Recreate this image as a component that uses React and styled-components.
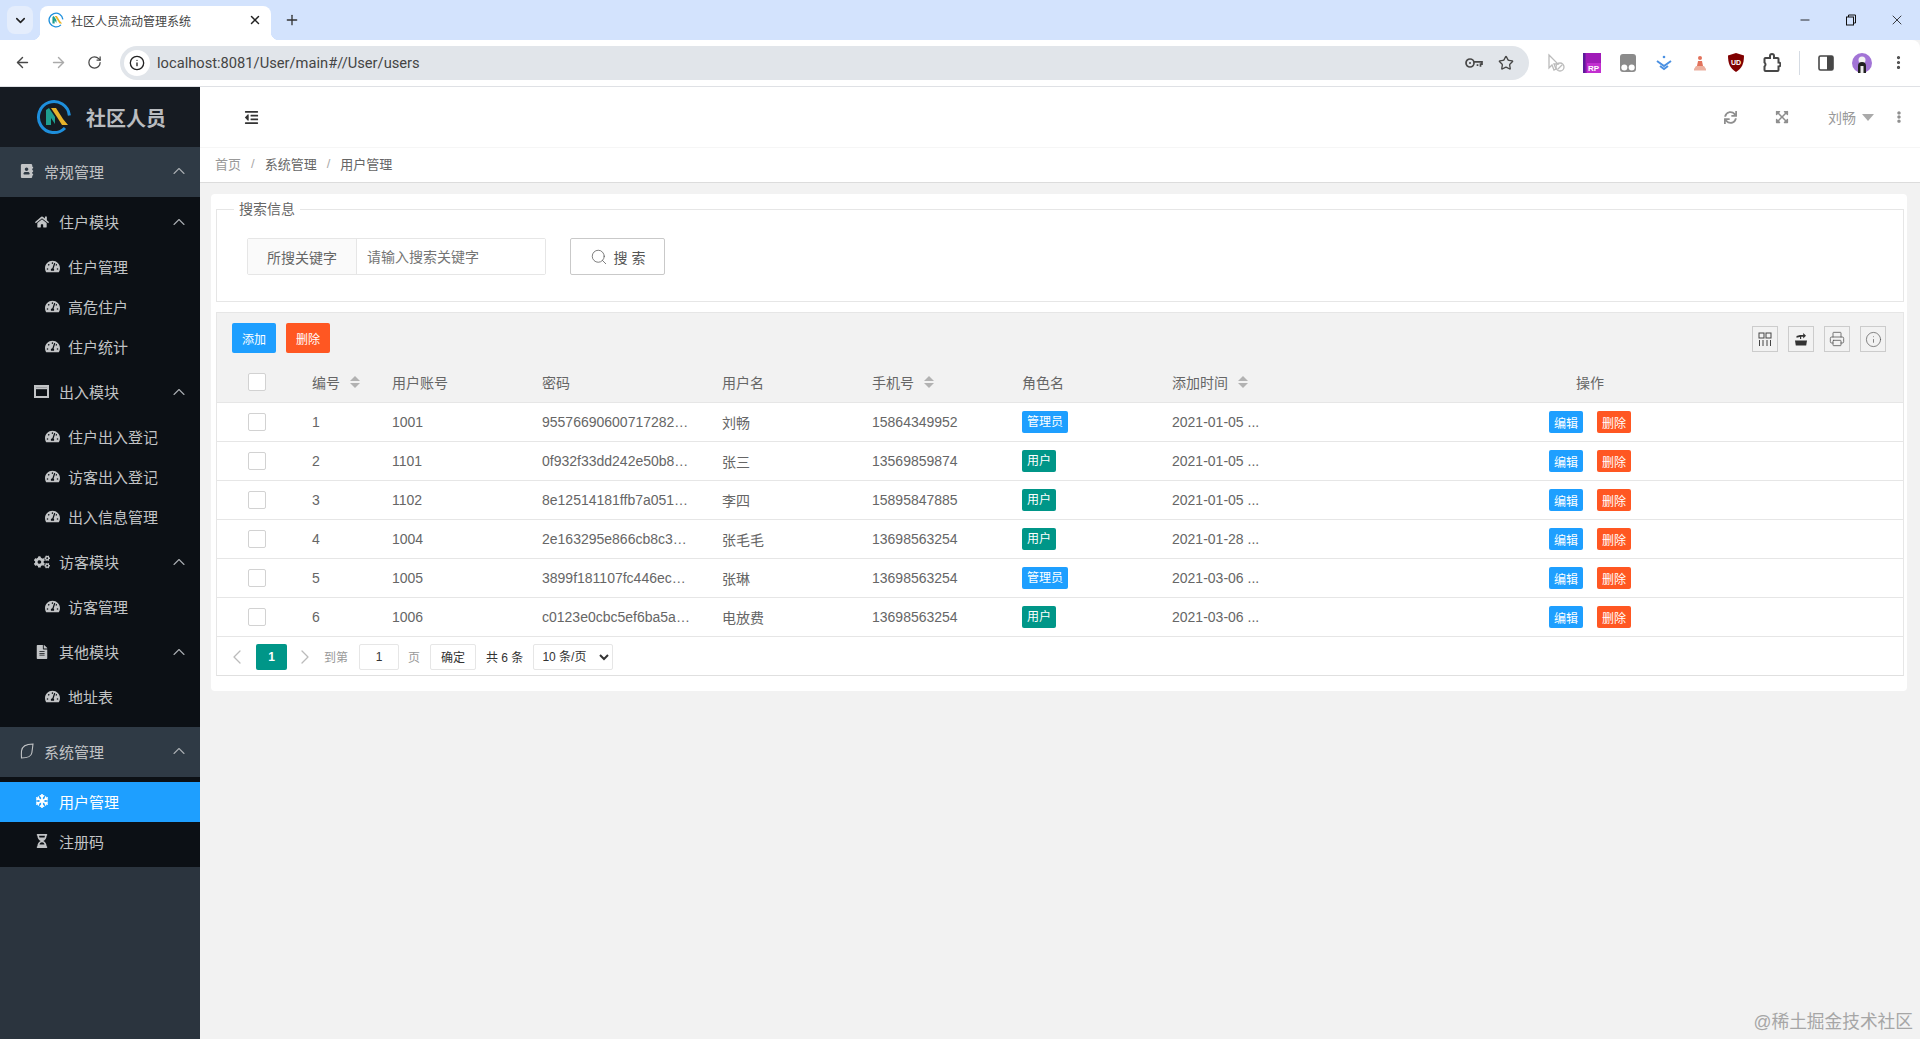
import React from 'react'
import styled, { createGlobalStyle } from 'styled-components'
import {
  ArrowLeft, ArrowRight, ChevronDown, ChevronUp, ChevronLeft, ChevronRight, EllipsisVertical, Info,
  Minus, Plus, Printer, RotateCw, Search, Star, X,
} from 'lucide-react'
import {
  FaAddressBook, FaCogs, FaEllipsisV, FaExpandArrowsAlt, FaFileAlt, FaHome, FaHourglassHalf,
  FaOutdent, FaSnowflake, FaSync, FaTachometerAlt,
} from 'react-icons/fa'

const GlobalStyle = createGlobalStyle`
  html, body { margin: 0; padding: 0; height: 100%; }
  body {
    font-family: "Liberation Sans", "Noto Sans CJK SC", sans-serif;
    font-size: 14px;
    color: #666;
    background: #f2f2f2;
  }
  * { box-sizing: border-box; }
`

const Page = styled.div`
  display: flex;
  flex-direction: column;
  height: 100vh;
  overflow: hidden;
  position: relative;
`

/* browser chrome */
const TabStrip = styled.div`
  display: flex;
  align-items: flex-start;
  height: 40px;
  padding: 6px 0 0 7px;
  background: #d3e3fd;
  flex-shrink: 0;
`
const TabMenu = styled.div`
  width: 26px;
  height: 28px;
  border-radius: 8px;
  background: #e4edfc;
  color: #222;
  display: flex;
  align-items: center;
  justify-content: center;
`
const Tab = styled.div`
  position: relative;
  width: 231px;
  height: 34px;
  margin-left: 7px;
  padding: 0 9px 6px 8px;
  display: flex;
  align-items: center;
  background: #fff;
  border-radius: 8px 8px 0 0;
  &::before, &::after {
    content: "";
    position: absolute;
    bottom: 0;
    width: 8px;
    height: 8px;
  }
  &::before { left: -8px; background: radial-gradient(circle at 0 0, transparent 8px, #fff 8.5px); }
  &::after { right: -8px; background: radial-gradient(circle at 100% 0, transparent 8px, #fff 8.5px); }
`
const TabTitle = styled.span`
  margin-left: 7px;
  flex: 1;
  font-size: 12px;
  color: #444;
  white-space: nowrap;
`
const NewTab = styled.div`
  width: 26px;
  height: 28px;
  margin-left: 8px;
  color: #333;
  display: flex;
  align-items: center;
  justify-content: center;
`
const WindowControls = styled.div`
  display: flex;
  margin: -6px 0 0 auto;
`
const WindowButton = styled.div`
  width: 46px;
  height: 40px;
  color: #111;
  display: flex;
  align-items: center;
  justify-content: center;
`
const Toolbar = styled.div`
  display: flex;
  align-items: center;
  height: 47px;
  padding: 0 4px 1px;
  background: #fff;
  border-bottom: 1px solid #dfe1e5;
  border-radius: 0 8px 0 0;
  flex-shrink: 0;
`
const Slot = styled.div`
  width: ${p => p.$w || 36}px;
  height: 34px;
  flex-shrink: 0;
  display: flex;
  align-items: center;
  justify-content: center;
  color: ${p => p.$color || '#474747'};
`
const Omnibox = styled.div`
  flex: 1;
  height: 34px;
  margin: 0 9px 0 8px;
  padding: 0 7px 0 4px;
  display: flex;
  align-items: center;
  background: #e1e5ea;
  border-radius: 17px;
`
const SiteInfo = styled.div`
  width: 26px;
  height: 26px;
  border-radius: 50%;
  background: #fff;
  color: #222;
  display: flex;
  align-items: center;
  justify-content: center;
`
const UrlText = styled.span`
  flex: 1;
  margin-left: 7px;
  font-family: Roboto, "Liberation Sans", sans-serif;
  font-size: 14.7px;
  color: #444;
`
const Divider = styled.div`
  width: 1px;
  height: 24px;
  background: #d5dbe3;
`

/* page frame */
const Body = styled.div`
  flex: 1;
  display: flex;
  min-height: 0;
`
const Sidebar = styled.aside`
  width: 200px;
  flex-shrink: 0;
  background: #2b343e;
  color: #c2c4c6;
`
const Brand = styled.div`
  height: 60px;
  padding-left: 36px;
  display: flex;
  align-items: center;
  gap: 14px;
  background: #161b22;
`
const BrandName = styled.span`
  font-size: 20px;
  font-weight: 700;
  color: #b9bcc0;
`
const NavRow = styled.div`
  display: flex;
  align-items: center;
  height: ${p => p.$h}px;
  padding: 0 11px 2px ${p => p.$indent}px;
  gap: ${p => p.$gap}px;
  font-size: 15px;
  color: ${p => (p.$active ? '#fff' : 'inherit')};
  background: ${p => (p.$active ? '#1e9fff' : p.$group ? '#2f3a45' : 'transparent')};
`
const NavIcon = styled.span`
  width: ${p => p.$w}px;
  display: flex;
  justify-content: center;
  flex-shrink: 0;
  & > svg { flex-shrink: 0; }
`
const NavArrow = styled(ChevronUp)`
  margin-left: auto;
  color: #a9adb1;
`
const SubMenu = styled.div`
  background: #0c1015;
  padding: ${p => p.$pad};
`
const SubList = styled.div`
  padding: 2px 0 3px;
`

const Main = styled.main`
  flex: 1;
  min-width: 0;
  display: flex;
  flex-direction: column;
`
const TopBar = styled.div`
  height: 61px;
  padding: 0 15px 0 44px;
  display: flex;
  align-items: center;
  background: #fff;
  border-bottom: 1px solid #f6f6f6;
  color: #333;
`
const TopTools = styled.div`
  margin-left: auto;
  display: flex;
  align-items: center;
  color: #8f8f8f;
`
const TopTool = styled.div`
  width: 52px;
  display: flex;
  justify-content: center;
`
const UserMenu = styled.div`
  margin-left: 20px;
  display: flex;
  align-items: center;
  gap: 6px;
  font-size: 14px;
  color: #999;
`
const UserCaret = styled.span`
  border: 6px solid transparent;
  border-top: 7px solid #aaa;
  border-bottom: 0;
`
const TopDots = styled.div`
  margin-left: 19px;
  display: flex;
`
const Crumbs = styled.div`
  height: 35px;
  padding: 0 0 3px 15px;
  display: flex;
  align-items: center;
  background: #fff;
  border-bottom: 1px solid #dcdcdc;
  font-size: 13px;
  color: #666;
`
const CrumbSep = styled.span`
  margin: 0 10px;
  color: #aaa;
`
const CrumbHome = styled.span`
  color: #999;
`
const Content = styled.div`
  flex: 1;
  padding: 11px 13px 0 11px;
  background: #f2f2f2;
`
const Card = styled.div`
  padding: 6px 3px 15px 5px;
  background: #fff;
  border-radius: 4px;
`

/* search */
const SearchBox = styled.fieldset`
  margin: 0;
  padding: 20px 30px 26px;
  border: 1px solid #e6e6e6;
  min-width: 0;
`
const SearchLegend = styled.legend`
  margin-left: -13px;
  padding: 0 5px;
  font-size: 14px;
  line-height: 18px;
  color: #666;
`
const SearchForm = styled.div`
  display: flex;
`
const InputGroup = styled.div`
  width: 299px;
  height: 37px;
  display: flex;
  border: 1px solid #e6e6e6;
  border-radius: 2px;
`
const InputLabel = styled.label`
  width: 109px;
  display: flex;
  align-items: center;
  justify-content: center;
  background: #fafafa;
  border-right: 1px solid #e6e6e6;
  color: #666;
`
const SearchInput = styled.input`
  flex: 1;
  min-width: 0;
  padding: 0 10px;
  border: 0;
  outline: 0;
  font: inherit;
  color: #666;
  &::placeholder { color: #757575; opacity: 1; }
`
const SearchButton = styled.button`
  width: 95px;
  height: 37px;
  margin-left: 24px;
  display: flex;
  align-items: center;
  justify-content: center;
  gap: 6px;
  background: #fff;
  border: 1px solid #c9c9c9;
  border-radius: 2px;
  font: inherit;
  color: #555;
`

/* table */
const TableBox = styled.div`
  margin-top: 10px;
  border: 1px solid #e6e6e6;
  border-bottom-color: #e0e0e0;
`
const TableTools = styled.div`
  height: 49px;
  padding: 10px 17px 0 15px;
  display: flex;
  background: #f2f2f2;
`
const ToolButton = styled.button`
  height: 30px;
  width: 44px;
  margin-right: 10px;
  padding: 0;
  border: 0;
  border-radius: 2px;
  font: inherit;
  font-size: 12px;
  color: #fff;
  background: ${p => (p.$danger ? '#ff5722' : '#1e9fff')};
`
const ToolIcons = styled.div`
  margin-left: auto;
  padding-top: 3px;
  display: flex;
  gap: 10px;
`
const ToolIcon = styled.div`
  width: 26px;
  height: 26px;
  display: flex;
  align-items: center;
  justify-content: center;
  border: 1px solid #ccc;
  color: #555;
`
const DataTable = styled.table`
  width: 100%;
  table-layout: fixed;
  border-collapse: separate;
  border-spacing: 0;
`
const Th = styled.th`
  width: ${p => (p.$w ? `${p.$w}px` : 'auto')};
  height: 41px;
  padding: 0 15px;
  font-weight: 400;
  text-align: ${p => p.$align || 'left'};
  background: #f2f2f2;
  border-bottom: 1px solid #e6e6e6;
  color: #666;
`
const Td = styled.td`
  height: 39px;
  padding: 0 15px;
  border-bottom: 1px solid #e6e6e6;
  text-align: ${p => p.$align || 'left'};
  color: #666;
  white-space: nowrap;
`
const Check = styled.input.attrs({ type: 'checkbox' })`
  appearance: none;
  display: block;
  width: 18px;
  height: 18px;
  margin: 0 auto;
  background: #fff;
  border: 1px solid #d2d2d2;
  border-radius: 2px;
`
const SortHead = styled.span`
  display: inline-flex;
  align-items: center;
  gap: 10px;
`
const SortCarets = styled.span`
  display: flex;
  flex-direction: column;
  gap: 2px;
  &::before, &::after {
    content: "";
    border: 5px solid transparent;
    border-top: 0;
    border-bottom: 5px solid #b2b2b2;
  }
  &::after {
    border-bottom: 0;
    border-top: 5px solid #b2b2b2;
  }
`
const Tag = styled.span`
  display: inline-block;
  height: 22px;
  padding: 0 5px;
  line-height: 22px;
  vertical-align: middle;
  border-radius: 2px;
  font-size: 12px;
  color: #fff;
  background: ${p => (p.$admin ? '#1e9fff' : '#009688')};
`
const RowButton = styled.button`
  width: 34px;
  height: 22px;
  padding: 0;
  border: 0;
  border-radius: 2px;
  vertical-align: middle;
  font: inherit;
  font-size: 12px;
  color: #fff;
  background: ${p => (p.$danger ? '#ff5722' : '#1e9fff')};
  & + & { margin-left: 14px; }
`
const Pager = styled.div`
  height: 38px;
  padding: 1px 0 0 14px;
  display: flex;
  align-items: center;
  font-size: 12px;
  color: #999;
`
const PagerArrow = styled.span`
  width: 12px;
  margin: ${p => p.$m};
  display: flex;
  justify-content: center;
  color: #bbb;
  & > svg { flex-shrink: 0; }
`
const PageActive = styled.span`
  width: 31px;
  height: 26px;
  display: flex;
  align-items: center;
  justify-content: center;
  border-radius: 2px;
  font-weight: 700;
  color: #fff;
  background: #009688;
`
const PagerInput = styled.input`
  width: 40px;
  height: 26px;
  margin: 0 9px 0 11px;
  padding: 0;
  border: 1px solid #e6e6e6;
  border-radius: 2px;
  outline: 0;
  text-align: center;
  font: inherit;
  color: #333;
`
const PagerOk = styled.button`
  width: 46px;
  height: 26px;
  margin: 0 10px 0 10px;
  padding: 0;
  background: #fff;
  border: 1px solid #e6e6e6;
  border-radius: 2px;
  font: inherit;
  color: #333;
`
const PagerCount = styled.span`
  color: #333;
`
const PagerSelect = styled.select`
  width: 80px;
  height: 26px;
  margin-left: 10px;
  padding: 0 0 0 4px;
  background: #fff;
  border: 1px solid #e6e6e6;
  border-radius: 2px;
  outline: 0;
  font: inherit;
  color: #333;
`
const Watermark = styled.div`
  position: absolute;
  right: 7px;
  bottom: 6px;
  font-size: 17.7px;
  color: #a6a6a6;
  white-space: nowrap;
`

const Logo = ({ size }) => (
  <svg width={size} height={size} viewBox="0 0 36 36" fill="none">
    <path d="M33.4 16.500A15.500 15.500 0 1 0 29 29" stroke="#1e8fdc" strokeWidth="3" />
    <path d="M10 26V11l3-2 6 9v7l-4-6v7h-5z" fill="#1f9e8f" />
    <path d="M15 9h5l7 11 5 6h-6l-5-8z" fill="#e8b32a" />
  </svg>
)

const LeafIcon = () => (
  <svg width="14" height="16" viewBox="0 0 14 16" fill="none" stroke="currentColor" strokeWidth="1.1">
    <path d="M13 1C7 1 2 3 1.500 8C1.200 11 1.500 15 1.500 15C6 15 11 14.500 11.800 10C12.300 7 13 1 13 1Z" />
  </svg>
)

const WindowIcon = () => (
  <svg width="15" height="13" viewBox="0 0 15 13" fill="none" stroke="currentColor">
    <rect x="1" y="1" width="13" height="11" strokeWidth="2" />
    <path d="M1 3.200h13" strokeWidth="2" />
  </svg>
)

const ColsIcon = () => (
  <svg width="14" height="14" viewBox="0 0 14 14" fill="none" stroke="#444" strokeWidth="1">
    <rect x="1" y="1" width="5" height="5" />
    <rect x="8" y="1" width="5" height="5" />
    <path d="M1.500 8v6M5 8v6M9 8v6M12.500 8v6" />
  </svg>
)

const ExportIcon = () => (
  <svg width="14" height="14" viewBox="0 0 14 14" fill="#333">
    <path d="M1 8.500h12l-.8 5H1.800z" />
    <path d="M3.500 7.500V5.200l3.500-.8V6.500h1.200V4.200h2V6L13 3.200 10.200.5v2H7L3.500 3.500z" transform="translate(-1 0.500)" />
  </svg>
)

const KeyIcon = () => (
  <svg width="18" height="12" viewBox="0 0 18 12" fill="none" stroke="#474747" strokeWidth="1.700">
    <circle cx="5" cy="6" r="4" />
    <circle cx="5" cy="6" r="1" fill="#474747" stroke="none" />
    <path d="M9 4.800h8v2.400h-1.500v2.500M12.500 7.200v1.800" />
  </svg>
)
const ExtensionIcon = () => (
  <svg width="18" height="20" viewBox="0 0 18 20" fill="none" stroke="#474747" strokeWidth="2">
    <path d="M2.500 5H7V3a2 2 0 0 1 4 0v2h3.500a1 1 0 0 1 1 1v3.500a2 2 0 0 1 0 4V17a1 1 0 0 1-1 1H2.500a1 1 0 0 1-1-1v-3.500a2.500 2.500 0 0 0 0-4V6a1 1 0 0 1 1-1z" />
  </svg>
)
const CursorOff = () => (
  <svg width="20" height="20" viewBox="0 0 20 20" fill="none" stroke="#bbb" strokeWidth="1.300">
    <path d="M3 2l9 9h-4l2 5-2 1-2-5-3 3z" />
    <circle cx="14" cy="14" r="4" />
    <path d="M11.500 16.500l5-5" />
  </svg>
)
const RpIcon = () => (
  <svg width="18" height="20" viewBox="0 0 18 20">
    <rect width="18" height="20" fill="#a01bb8" />
    <rect x="0" width="2.500" height="20" fill="#5c1a9a" />
    <rect x="4" y="10" width="14" height="10" fill="#c22fd0" />
    <text x="5" y="18" fontSize="8" fontWeight="700" fill="#fff" fontFamily="Liberation Sans">RP</text>
  </svg>
)
const GlassesIcon = () => (
  <svg width="16" height="18" viewBox="0 0 16 18">
    <path d="M3 0h10a3 3 0 0 1 3 3v12a3 3 0 0 1-3 3H3a3 3 0 0 1-3-3V3a3 3 0 0 1 3-3z" fill="#8b8b8b" />
    <circle cx="4.300" cy="13.500" r="3" fill="#fff" />
    <circle cx="11.700" cy="13.500" r="3" fill="#fff" />
  </svg>
)
const BlueChevrons = () => (
  <svg width="18" height="18" viewBox="0 0 18 18" fill="none" stroke="#4a90e2" strokeWidth="2">
    <path d="M2 7l7 5 7-5" />
    <path d="M5 12l4 3 4-3" />
    <circle cx="9" cy="3" r="1.300" fill="#4a90e2" stroke="none" />
  </svg>
)
const FigureIcon = () => (
  <svg width="14" height="16" viewBox="0 0 14 16" fill="#e2725b">
    <circle cx="7" cy="3" r="2" />
    <path d="M5 6h4l1 5H4z" />
    <path d="M1 14l2-3h8l2 3v1.500H1z" fill="#ecb09f" />
  </svg>
)
const ShieldIcon = () => (
  <svg width="16" height="19" viewBox="0 0 16 19">
    <path d="M8 0l8 2.500c0 8-2 13-8 16.500C2 15.500 0 10.500 0 2.500z" fill="#800000" />
    <text x="3" y="12" fontSize="7" fontWeight="700" fill="#fff" fontFamily="Liberation Sans">UD</text>
  </svg>
)
const SidePanel = () => (
  <svg width="16" height="16" viewBox="0 0 16 16">
    <rect x="1" y="1" width="14" height="14" rx="1.500" fill="none" stroke="#474747" strokeWidth="1.600" />
    <rect x="9" y="1" width="6" height="14" fill="#474747" />
  </svg>
)
const Avatar = () => (
  <svg width="20" height="20" viewBox="0 0 20 20">
    <circle cx="10" cy="10" r="10" fill="#a274d6" />
    <circle cx="10" cy="7" r="3.500" fill="#f3f3f3" />
    <path d="M6 20v-7a4 4 0 0 1 8 0v7z" fill="#222" />
    <rect x="8.500" y="13" width="3" height="7" fill="#eee" />
  </svg>
)
const Restore = () => (
  <svg width="12" height="12" viewBox="0 0 12 12" fill="none" stroke="#111" strokeWidth="1">
    <rect x="1.500" y="3" width="7" height="8" />
    <path d="M3.500 3V1h7v8H8.500" />
  </svg>
)

const Gauge = <FaTachometerAlt size={15} />

const navGroups = [
  {
    title: '常规管理',
    icon: <FaAddressBook size={14} />,
    pad: '3px 0 7px',
    modules: [
      { title: '住户模块', icon: <FaHome size={14} />, items: ['住户管理', '高危住户', '住户统计'] },
      { title: '出入模块', icon: <WindowIcon />, items: ['住户出入登记', '访客出入登记', '出入信息管理'] },
      { title: '访客模块', icon: <FaCogs size={16} />, items: ['访客管理'] },
      { title: '其他模块', icon: <FaFileAlt size={14} />, items: ['地址表'] },
    ],
  },
]

const users = [
  { id: 1, account: '1001', pwd: '95576690600717282…', name: '刘畅', phone: '15864349952', admin: true, time: '2021-01-05 ...' },
  { id: 2, account: '1101', pwd: '0f932f33dd242e50b8…', name: '张三', phone: '13569859874', admin: false, time: '2021-01-05 ...' },
  { id: 3, account: '1102', pwd: '8e12514181ffb7a051…', name: '李四', phone: '15895847885', admin: false, time: '2021-01-05 ...' },
  { id: 4, account: '1004', pwd: '2e163295e866cb8c3…', name: '张毛毛', phone: '13698563254', admin: false, time: '2021-01-28 ...' },
  { id: 5, account: '1005', pwd: '3899f181107fc446ec…', name: '张琳', phone: '13698563254', admin: true, time: '2021-03-06 ...' },
  { id: 6, account: '1006', pwd: 'c0123e0cbc5ef6ba5a…', name: '电放费', phone: '13698563254', admin: false, time: '2021-03-06 ...' },
]

const App = () => {
  return (
    <Page>
      <GlobalStyle />
      <TabStrip>
        <TabMenu><ChevronDown size={15} strokeWidth={2.5} /></TabMenu>
        <Tab>
          <Logo size={16} />
          <TabTitle>社区人员流动管理系统</TabTitle>
          <X size={14} strokeWidth={2.5} color="#222" />
        </Tab>
        <NewTab><Plus size={16} strokeWidth={2} /></NewTab>
        <WindowControls>
          <WindowButton><Minus size={14} strokeWidth={1.5} /></WindowButton>
          <WindowButton><Restore /></WindowButton>
          <WindowButton><X size={16} strokeWidth={1.2} /></WindowButton>
        </WindowControls>
      </TabStrip>
      <Toolbar>
        <Slot><ArrowLeft size={17} strokeWidth={2} /></Slot>
        <Slot $color="#aaa"><ArrowRight size={17} strokeWidth={2} /></Slot>
        <Slot><RotateCw size={15} strokeWidth={2} /></Slot>
        <Omnibox>
          <SiteInfo><Info size={16} strokeWidth={2} /></SiteInfo>
          <UrlText>localhost:8081/User/main#//User/users</UrlText>
          <Slot $w={32}><KeyIcon /></Slot>
          <Slot $w={32}><Star size={16} strokeWidth={2} /></Slot>
        </Omnibox>
        <Slot><CursorOff /></Slot>
        <Slot><RpIcon /></Slot>
        <Slot><GlassesIcon /></Slot>
        <Slot><BlueChevrons /></Slot>
        <Slot><FigureIcon /></Slot>
        <Slot><ShieldIcon /></Slot>
        <Slot><ExtensionIcon /></Slot>
        <Slot $w={18}><Divider /></Slot>
        <Slot><SidePanel /></Slot>
        <Slot><Avatar /></Slot>
        <Slot><EllipsisVertical size={17} strokeWidth={2.5} /></Slot>
      </Toolbar>
      <Body>
        <Sidebar>
          <Brand>
            <Logo size={36} />
            <BrandName>社区人员</BrandName>
          </Brand>
          {navGroups.map(group => (
            <React.Fragment key={group.title}>
              <NavRow $group $h={50} $indent={20} $gap={11}>
                <NavIcon $w={13}>{group.icon}</NavIcon>
                {group.title}
                <NavArrow size={20} strokeWidth={1.3} />
              </NavRow>
              <SubMenu $pad={group.pad}>
                {group.modules.map(mod => (
                  <React.Fragment key={mod.title}>
                    <NavRow $h={45} $indent={35} $gap={11}>
                      <NavIcon $w={13}>{mod.icon}</NavIcon>
                      {mod.title}
                      <NavArrow size={20} strokeWidth={1.3} />
                    </NavRow>
                    <SubList>
                      {mod.items.map(item => (
                        <NavRow key={item} $h={40} $indent={45} $gap={9}>
                          <NavIcon $w={14}>{Gauge}</NavIcon>
                          {item}
                        </NavRow>
                      ))}
                    </SubList>
                  </React.Fragment>
                ))}
              </SubMenu>
            </React.Fragment>
          ))}
          <NavRow $group $h={50} $indent={20} $gap={11}>
            <NavIcon $w={13}><LeafIcon /></NavIcon>
            系统管理
            <NavArrow size={20} strokeWidth={1.3} />
          </NavRow>
          <SubMenu $pad="5px 0">
            <NavRow $active $h={40} $indent={35} $gap={11}>
              <NavIcon $w={13}><FaSnowflake size={14} /></NavIcon>
              用户管理
            </NavRow>
            <NavRow $h={40} $indent={35} $gap={11}>
              <NavIcon $w={13}><FaHourglassHalf size={14} /></NavIcon>
              注册码
            </NavRow>
          </SubMenu>
        </Sidebar>
        <Main>
          <TopBar>
            <FaOutdent size={15} />
            <TopTools>
              <TopTool><FaSync size={13} /></TopTool>
              <TopTool><FaExpandArrowsAlt size={14} /></TopTool>
              <UserMenu>刘畅<UserCaret /></UserMenu>
              <TopDots><FaEllipsisV size={12} /></TopDots>
            </TopTools>
          </TopBar>
          <Crumbs>
            <CrumbHome>首页</CrumbHome>
            <CrumbSep>/</CrumbSep>
            <span>系统管理</span>
            <CrumbSep>/</CrumbSep>
            <span>用户管理</span>
          </Crumbs>
          <Content>
            <Card>
              <SearchBox>
                <SearchLegend>搜索信息</SearchLegend>
                <SearchForm>
                  <InputGroup>
                    <InputLabel>所搜关键字</InputLabel>
                    <SearchInput placeholder="请输入搜索关键字" />
                  </InputGroup>
                  <SearchButton>
                    <Search size={18} strokeWidth={1} />
                    搜 索
                  </SearchButton>
                </SearchForm>
              </SearchBox>
              <TableBox>
                <TableTools>
                  <ToolButton>添加</ToolButton>
                  <ToolButton $danger>删除</ToolButton>
                  <ToolIcons>
                    <ToolIcon><ColsIcon /></ToolIcon>
                    <ToolIcon><ExportIcon /></ToolIcon>
                    <ToolIcon><Printer size={16} strokeWidth={1.2} /></ToolIcon>
                    <ToolIcon><Info size={17} strokeWidth={1} /></ToolIcon>
                  </ToolIcons>
                </TableTools>
                <DataTable>
                  <thead>
                    <tr>
                      <Th $w={80}><Check /></Th>
                      <Th $w={80}><SortHead>编号<SortCarets /></SortHead></Th>
                      <Th $w={150}>用户账号</Th>
                      <Th $w={180}>密码</Th>
                      <Th $w={150}>用户名</Th>
                      <Th $w={150}><SortHead>手机号<SortCarets /></SortHead></Th>
                      <Th $w={150}>角色名</Th>
                      <Th $w={120}><SortHead>添加时间<SortCarets /></SortHead></Th>
                      <Th $align="center">操作</Th>
                    </tr>
                  </thead>
                  <tbody>
                    {users.map(u => (
                      <tr key={u.id}>
                        <Td><Check /></Td>
                        <Td>{u.id}</Td>
                        <Td>{u.account}</Td>
                        <Td>{u.pwd}</Td>
                        <Td>{u.name}</Td>
                        <Td>{u.phone}</Td>
                        <Td><Tag $admin={u.admin}>{u.admin ? '管理员' : '用户'}</Tag></Td>
                        <Td>{u.time}</Td>
                        <Td $align="center">
                          <RowButton>编辑</RowButton>
                          <RowButton $danger>删除</RowButton>
                        </Td>
                      </tr>
                    ))}
                  </tbody>
                </DataTable>
                <Pager>
                  <PagerArrow $m="0 13px 0 0"><ChevronLeft size={24} strokeWidth={1.3} /></PagerArrow>
                  <PageActive>1</PageActive>
                  <PagerArrow $m="0 13px 0 12px"><ChevronRight size={24} strokeWidth={1.3} /></PagerArrow>
                  <span>到第</span>
                  <PagerInput defaultValue="1" />
                  <span>页</span>
                  <PagerOk>确定</PagerOk>
                  <PagerCount>共 6 条</PagerCount>
                  <PagerSelect defaultValue="10">
                    <option value="10">10 条/页</option>
                    <option value="20">20 条/页</option>
                    <option value="30">30 条/页</option>
                  </PagerSelect>
                </Pager>
              </TableBox>
            </Card>
          </Content>
        </Main>
      </Body>
      <Watermark>@稀土掘金技术社区</Watermark>
    </Page>
  )
}

export default App
